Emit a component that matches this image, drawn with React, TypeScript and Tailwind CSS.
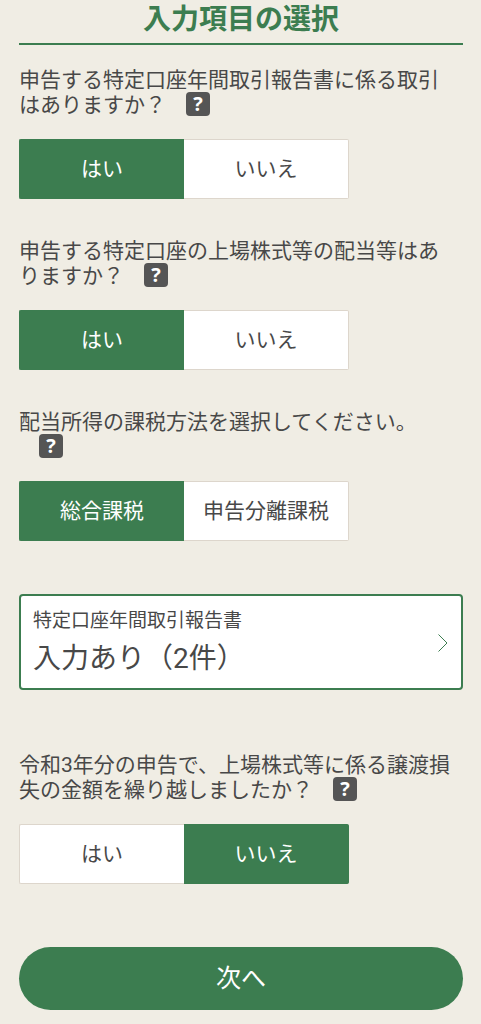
import { useState } from 'react';

interface ChoiceProps {
  name: string;
  question: string;
  options: string[];
  initial: string;
}

function Choice({ name, question, options, initial }: ChoiceProps) {
  const [selected, setSelected] = useState(initial);

  return (
    <fieldset>
      <legend className="w-full pr-2 text-[21px] leading-[25px]">
        {question}
        <button
          type="button"
          aria-label="ヘルプ"
          className="-mt-px ml-[20px] inline-flex size-6 items-center justify-center rounded bg-[#555] align-top font-['Open_Sans',sans-serif] text-xl leading-6 font-bold text-white"
        >
          ?
        </button>
      </legend>
      <div className="mt-[21px] grid h-[60px] max-w-[330px] grid-cols-2">
        {options.map((option) => (
          <label
            key={option}
            className="flex cursor-pointer items-center justify-center border border-[#ddd6cc] bg-white text-[21px] leading-[25px] first:rounded-l-xs first:border-r-0 last:rounded-r-xs last:border-l-0 has-checked:border-[#3c7d50] has-checked:bg-[#3c7d50] has-checked:text-white"
          >
            <input
              type="radio"
              name={name}
              value={option}
              checked={selected === option}
              onChange={() => setSelected(option)}
              className="sr-only"
            />
            {option}
          </label>
        ))}
      </div>
    </fieldset>
  );
}

export default function App() {
  return (
    <main className="min-h-screen bg-[#f0ede4] pr-[18px] pb-[14px] pl-[19px] font-['Roboto','Noto_Sans_CJK_JP',sans-serif] text-[#484848]">
      <h1 className="border-b-2 border-[#3c7d50] pt-[2px] pb-[6px] text-center text-[28px] leading-[35px] font-bold text-[#3c7d50]">
        入力項目の選択
      </h1>

      <div className="mt-[23px] flex flex-col gap-10">
        <Choice
          name="trade"
          question="申告する特定口座年間取引報告書に係る取引はありますか？"
          options={['はい', 'いいえ']}
          initial="はい"
        />
        <Choice
          name="dividend"
          question="申告する特定口座の上場株式等の配当等はありますか？"
          options={['はい', 'いいえ']}
          initial="はい"
        />
        <Choice
          name="taxation"
          question="配当所得の課税方法を選択してください。"
          options={['総合課税', '申告分離課税']}
          initial="総合課税"
        />
      </div>

      <a
        href="#report"
        className="mt-[53px] mb-[63px] flex items-center justify-between rounded border-2 border-[#3c7d50] bg-white pt-[11px] pr-[13px] pb-[9px] pl-3"
      >
        <span className="flex flex-col gap-1">
          <span className="text-[19px] leading-7">特定口座年間取引報告書</span>
          <span className="text-[28px] leading-[40px]">入力あり（2件）</span>
        </span>
        <svg className="h-[18px] w-[10px] text-[#3c7d50]" viewBox="0 0 10 18" fill="none" stroke="currentColor" aria-hidden="true">
          <path d="M0.5 0.5 9 9 0.5 17.5" />
        </svg>
      </a>

      <Choice
        name="carryover"
        question="令和3年分の申告で、上場株式等に係る譲渡損失の金額を繰り越しましたか？"
        options={['はい', 'いいえ']}
        initial="いいえ"
      />

      <button
        type="button"
        className="mt-[63px] h-[63px] w-full rounded-full bg-[#3c7d50] text-[25px] leading-8 text-white"
      >
        次へ
      </button>
    </main>
  );
}
